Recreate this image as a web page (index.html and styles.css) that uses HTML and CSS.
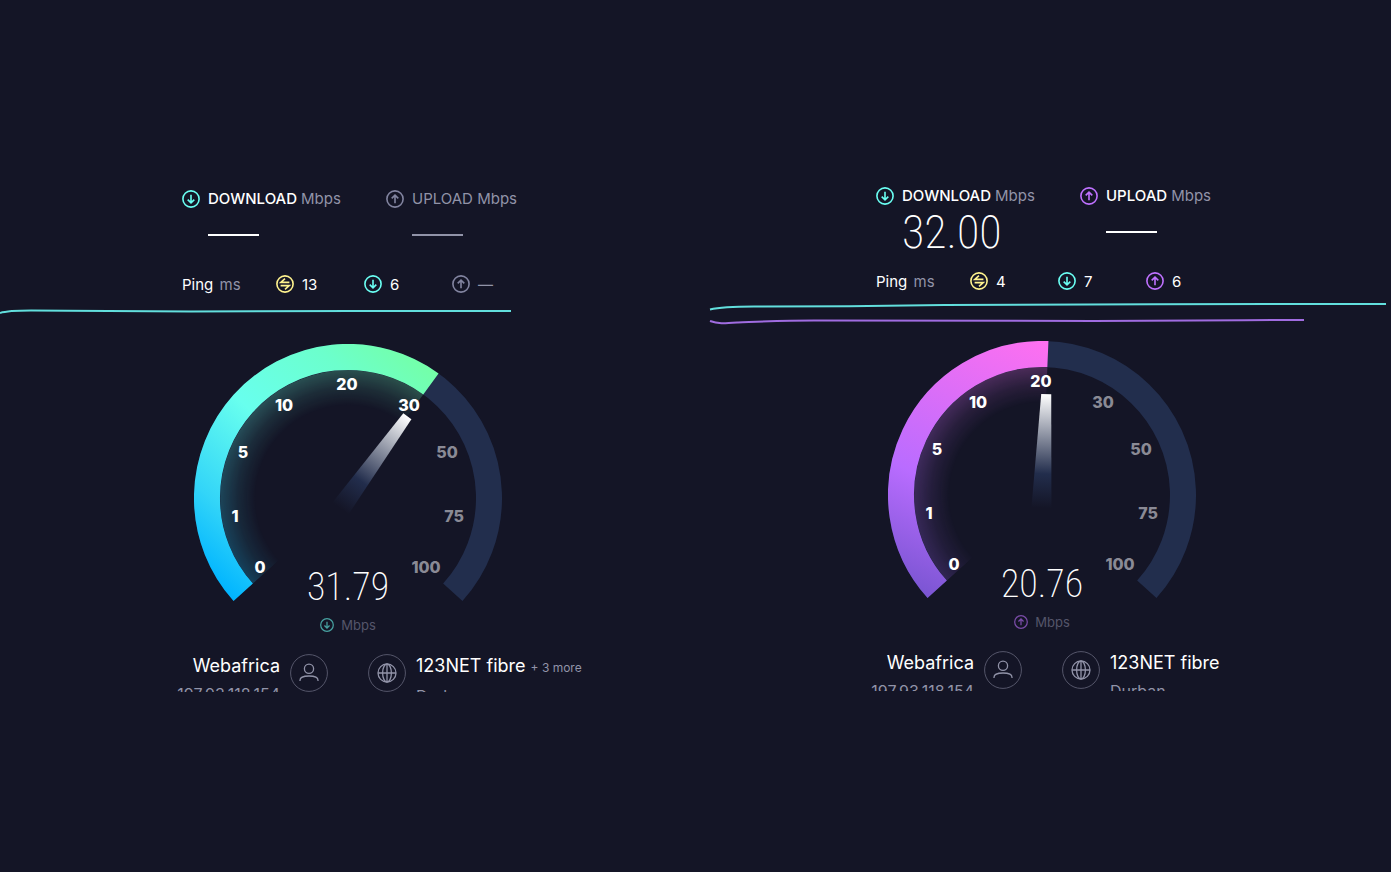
FILE: index.html
```html
<!DOCTYPE html>
<html lang="en">
<head>
    <meta charset="UTF-8">
    <meta name="viewport" content="width=device-width, initial-scale=1.0">
    <title>Speedtest</title>
    <link rel="stylesheet" href="styles.css">
</head>
<body>
    <svg class="defs" width="0" height="0" aria-hidden="true">
        <defs>
            <symbol id="icon-down" viewBox="0 0 18 18">
                <circle cx="9" cy="9" r="8.1"/>
                <path d="M9 4.8v8M5.7 9.6L9 12.9l3.3-3.3"/>
            </symbol>
            <symbol id="icon-up" viewBox="0 0 18 18">
                <circle cx="9" cy="9" r="8.1"/>
                <path d="M9 13.2v-8M5.7 8.4L9 5.1l3.3 3.3"/>
            </symbol>
            <symbol id="icon-idle" viewBox="0 0 18 18">
                <circle cx="9" cy="9" r="8.1"/>
                <path d="M13.400 7.400H4.800L9 3.700M4.600 10.600h8.600L9 14.300"/>
            </symbol>
            <symbol id="icon-user" viewBox="0 0 38 38">
                <circle class="ring" cx="19" cy="19" r="18.4"/>
                <circle cx="19" cy="14.8" r="4.6"/>
                <path d="M10 27v-.8c0-2.6 3-4.2 9-4.2s9 1.600 9 4.200v.8"/>
            </symbol>
            <symbol id="icon-globe" viewBox="0 0 38 38">
                <circle class="ring" cx="19" cy="19" r="18.4"/>
                <circle cx="19" cy="19" r="9"/>
                <ellipse cx="19" cy="19" rx="4.400" ry="9"/>
                <path d="M10 19h18M19 10v18"/>
            </symbol>
            <linearGradient id="arc-down" gradientUnits="userSpaceOnUse" x1="-114" y1="103" x2="90" y2="-124">
                <stop offset="0" stop-color="#00b4ff"/>
                <stop offset=".2" stop-color="#33d5f8"/>
                <stop offset=".5" stop-color="#68ffee"/>
                <stop offset=".8" stop-color="#6cffcc"/>
                <stop offset="1" stop-color="#74ffa8"/>
            </linearGradient>
            <linearGradient id="arc-up" gradientUnits="userSpaceOnUse" x1="-114" y1="103" x2="6" y2="-154">
                <stop offset="0" stop-color="#7a55d2"/>
                <stop offset=".38" stop-color="#b96cff"/>
                <stop offset="1" stop-color="#ff70f0"/>
            </linearGradient>
            <linearGradient id="needle" x1="0" y1="0" x2="0" y2="1">
                <stop offset="0" stop-color="#fff"/>
                <stop offset=".7" stop-color="#222d4c"/>
                <stop offset="1" stop-color="#141526"/>
            </linearGradient>
            <radialGradient id="glow-fade" gradientUnits="userSpaceOnUse" cx="0" cy="0" r="128">
                <stop offset=".72" stop-color="#fff" stop-opacity="0"/>
                <stop offset=".86" stop-color="#fff" stop-opacity=".1"/>
                <stop offset="1" stop-color="#fff" stop-opacity=".25"/>
            </radialGradient>
            <mask id="glow-mask" maskUnits="userSpaceOnUse" x="-154" y="-154" width="308" height="308">
                <circle r="128" fill="url(#glow-fade)"/>
            </mask>
        </defs>
    </svg>

    <main class="results">
        <section class="test">
            <div class="readings">
                <div class="reading">
                    <svg class="icon down"><use href="#icon-down"/></svg>
                    <h2 class="label">DOWNLOAD <span class="unit">Mbps</span></h2>
                    <div class="value"><span class="pending"></span></div>
                </div>
                <div class="reading inactive">
                    <svg class="icon idle"><use href="#icon-up"/></svg>
                    <h2 class="label">UPLOAD <span class="unit">Mbps</span></h2>
                    <div class="value"><span class="pending"></span></div>
                </div>
            </div>
            <div class="pings">
                <div class="ping-label">Ping <span class="unit">ms</span></div>
                <div class="ping"><svg class="icon latency"><use href="#icon-idle"/></svg>13</div>
                <div class="ping"><svg class="icon down"><use href="#icon-down"/></svg>6</div>
                <div class="ping inactive"><svg class="icon idle"><use href="#icon-up"/></svg>—</div>
            </div>
            <svg class="chart" viewBox="0 0 694 30" preserveAspectRatio="none">
                <path class="line-down" d="M-1 8C5 6 14 5.500 30 5.500C80 6 120 6.500 190 6.500C300 6 400 6 510 6"/>
            </svg>
            <svg class="gauge" viewBox="-154 -154 308 260">
                <path class="track" d="M-104.800 94.300A141 141 0 1 1 104.800 94.300"/>
                <path class="glow-down" mask="url(#glow-mask)" d="M0 0L-95.100 85.600A128 128 0 0 1 75.200 -103.600Z"/>
                <path class="arc-down" d="M-104.800 94.300A141 141 0 0 1 82.900 -114.100"/>
                <path class="needle" transform="rotate(36)" d="M-5 -101H5L10 13H-10Z"/>
                <g class="scale">
                    <text x="-88" y="75">0</text>
                    <text x="-113" y="24">1</text>
                    <text x="-105" y="-40">5</text>
                    <text x="-64" y="-87">10</text>
                    <text x="-1" y="-108">20</text>
                    <text x="61" y="-87">30</text>
                    <text class="off" x="99" y="-40">50</text>
                    <text class="off" x="106" y="24">75</text>
                    <text class="off" x="78" y="75">100</text>
                </g>
            </svg>
            <div class="current">31.79</div>
            <div class="current-unit"><svg class="icon down"><use href="#icon-down"/></svg>Mbps</div>
            <div class="hosts">
                <div class="host client">
                    <div class="host-text">
                        <div class="host-name">Webafrica</div>
                        <div class="host-detail">197.93.118.154</div>
                    </div>
                    <svg class="host-icon"><use href="#icon-user"/></svg>
                </div>
                <div class="host">
                    <svg class="host-icon"><use href="#icon-globe"/></svg>
                    <div class="host-text">
                        <div class="host-name">123NET fibre <a class="more" href="#">+ 3 more</a></div>
                        <div class="host-detail">Durban</div>
                    </div>
                </div>
            </div>
        </section>

        <section class="test raised">
            <div class="readings">
                <div class="reading">
                    <svg class="icon down"><use href="#icon-down"/></svg>
                    <h2 class="label">DOWNLOAD <span class="unit">Mbps</span></h2>
                    <div class="value">32.00</div>
                </div>
                <div class="reading">
                    <svg class="icon up"><use href="#icon-up"/></svg>
                    <h2 class="label">UPLOAD <span class="unit">Mbps</span></h2>
                    <div class="value"><span class="pending"></span></div>
                </div>
            </div>
            <div class="pings">
                <div class="ping-label">Ping <span class="unit">ms</span></div>
                <div class="ping"><svg class="icon latency"><use href="#icon-idle"/></svg>4</div>
                <div class="ping"><svg class="icon down"><use href="#icon-down"/></svg>7</div>
                <div class="ping"><svg class="icon up"><use href="#icon-up"/></svg>6</div>
            </div>
            <svg class="chart" viewBox="0 0 694 30" preserveAspectRatio="none">
                <path class="line-down" d="M15 7.500C25 5 39 4.500 59 4.500C129 4.500 179 4 249 3C399 2 540 2 691 2"/>
                <path class="line-up" d="M15 19C23 22 29 21.500 43 20.500C69 19.500 89 18.500 119 18.500C199 19 299 19 399 19C479 19 540 18 609 18"/>
            </svg>
            <svg class="gauge" viewBox="-154 -154 308 260">
                <path class="track" d="M-104.800 94.300A141 141 0 1 1 104.800 94.300"/>
                <path class="glow-up" mask="url(#glow-mask)" d="M0 0L-95.100 85.600A128 128 0 0 1 5.400 -127.900Z"/>
                <path class="arc-up" d="M-104.800 94.300A141 141 0 0 1 5.900 -140.900"/>
                <path class="needle" transform="rotate(2.4)" d="M-5 -101H5L10 13H-10Z"/>
                <g class="scale">
                    <text x="-88" y="75">0</text>
                    <text x="-113" y="24">1</text>
                    <text x="-105" y="-40">5</text>
                    <text x="-64" y="-87">10</text>
                    <text x="-1" y="-108">20</text>
                    <text class="off" x="61" y="-87">30</text>
                    <text class="off" x="99" y="-40">50</text>
                    <text class="off" x="106" y="24">75</text>
                    <text class="off" x="78" y="75">100</text>
                </g>
            </svg>
            <div class="current">20.76</div>
            <div class="current-unit"><svg class="icon up"><use href="#icon-up"/></svg>Mbps</div>
            <div class="hosts">
                <div class="host client">
                    <div class="host-text">
                        <div class="host-name">Webafrica</div>
                        <div class="host-detail">197.93.118.154</div>
                    </div>
                    <svg class="host-icon"><use href="#icon-user"/></svg>
                </div>
                <div class="host">
                    <svg class="host-icon"><use href="#icon-globe"/></svg>
                    <div class="host-text">
                        <div class="host-name">123NET fibre</div>
                        <div class="host-detail">Durban</div>
                    </div>
                </div>
            </div>
        </section>
    </main>
</body>
</html>
```
FILE: styles.css
```css
* {
    margin: 0;
    padding: 0;
    box-sizing: border-box;
}

body {
    font-family: Inter, "Open Sans", sans-serif;
    background: #141526;
    color: #fff;
    min-height: 100vh;
}

.defs {
    position: absolute;
}

.results {
    display: grid;
    grid-template-columns: 1fr 1fr;
    padding: 0 2px 0 1px;
}

.test {
    display: flex;
    flex-direction: column;
    align-items: center;
    padding-top: 189px;
}

.test.raised {
    padding-top: 186px;
}

/* Icons */
.icon {
    width: 18px;
    height: 18px;
    fill: none;
    stroke: currentColor;
    stroke-width: 1.6px;
}

.down {
    color: #6afff3;
}

.up {
    color: #bf71ff;
}

.latency {
    color: #fff38e;
}

.idle {
    color: #8284a0;
}

/* Download / upload readings */
.readings,
.pings {
    width: 332px;
}

.readings {
    display: grid;
    grid-template-columns: 204px 1fr;
}

.reading {
    display: grid;
    grid-template-columns: 18px auto;
    column-gap: 8px;
    align-items: center;
    justify-content: start;
}

.label {
    font-size: 15px;
    font-weight: 500;
    line-height: 20px;
    white-space: nowrap;
}

.unit {
    color: #9193a8;
    font-weight: 400;
}

.inactive,
.inactive .label {
    color: #9193a8;
    font-weight: 400;
}

.value {
    grid-column: 2;
    display: flex;
    align-items: center;
    height: 52px;
    font-family: "Roboto Condensed", Roboto, sans-serif;
    font-size: 46px;
    font-weight: 200;
}

.pending {
    width: 51px;
    height: 2px;
    background: currentColor;
}

/* Ping row */
.pings {
    display: grid;
    grid-template-columns: 94px 88px 88px 1fr;
    align-items: center;
    height: 24px;
    margin-top: 11px;
    font-size: 15px;
}

.ping-label .unit {
    margin-left: 2px;
}

.ping {
    display: flex;
    align-items: center;
    gap: 8px;
}

/* Live graph */
.chart {
    width: 100%;
    height: 30px;
    margin-top: 9px;
    overflow: visible;
    fill: none;
    stroke-width: 2px;
}

.chart path {
    vector-effect: non-scaling-stroke;
}

.line-down {
    stroke: #62dfdd;
}

.line-up {
    stroke: #a06ce0;
}

/* Gauge */
.gauge {
    width: 308px;
    height: 260px;
    margin-top: 9px;
}

.track,
.arc-down,
.arc-up {
    fill: none;
    stroke-width: 26px;
}

.track {
    stroke: #222e4d;
}

.arc-down {
    stroke: url(#arc-down);
}

.arc-up {
    stroke: url(#arc-up);
}

.glow-down {
    fill: url(#arc-down);
}

.glow-up {
    fill: url(#arc-up);
}

.needle {
    fill: url(#needle);
}

.scale {
    fill: #fff;
    font-size: 16px;
    font-weight: 800;
    text-anchor: middle;
}

.scale .off {
    fill: #8a8a95;
}

.current {
    height: 40px;
    margin-top: -37px;
    font-family: "Roboto Condensed", Roboto, sans-serif;
    font-size: 38px;
    font-weight: 200;
    line-height: 40px;
}

.current-unit {
    display: flex;
    align-items: center;
    gap: 7px;
    height: 20px;
    margin-top: 8px;
    color: #55566a;
    font-size: 13px;
}

.current-unit .icon {
    width: 14px;
    height: 14px;
    opacity: 0.6;
}

/* Provider and server, cut off under the first line */
.hosts {
    display: grid;
    grid-template-columns: 1fr 1fr;
    gap: 40px;
    width: 100%;
    height: 38px;
    margin-top: 19px;
    overflow: hidden;
}

.raised .hosts {
    height: 40px;
}

.host {
    display: flex;
    gap: 10px;
    white-space: nowrap;
}

.client {
    justify-content: flex-end;
    text-align: right;
}

.host-icon {
    flex: none;
    width: 38px;
    height: 38px;
    fill: none;
    stroke: #9193a8;
    stroke-width: 1.3px;
}

.ring {
    stroke: #55566a;
    stroke-width: 1px;
}

.host-name {
    font-size: 18px;
    line-height: 24px;
}

.host-detail {
    margin-top: 6px;
    color: #9193a8;
    font-size: 16px;
    line-height: 20px;
}

.more {
    color: #9193a8;
    font-size: 12px;
    text-decoration: none;
}
```
